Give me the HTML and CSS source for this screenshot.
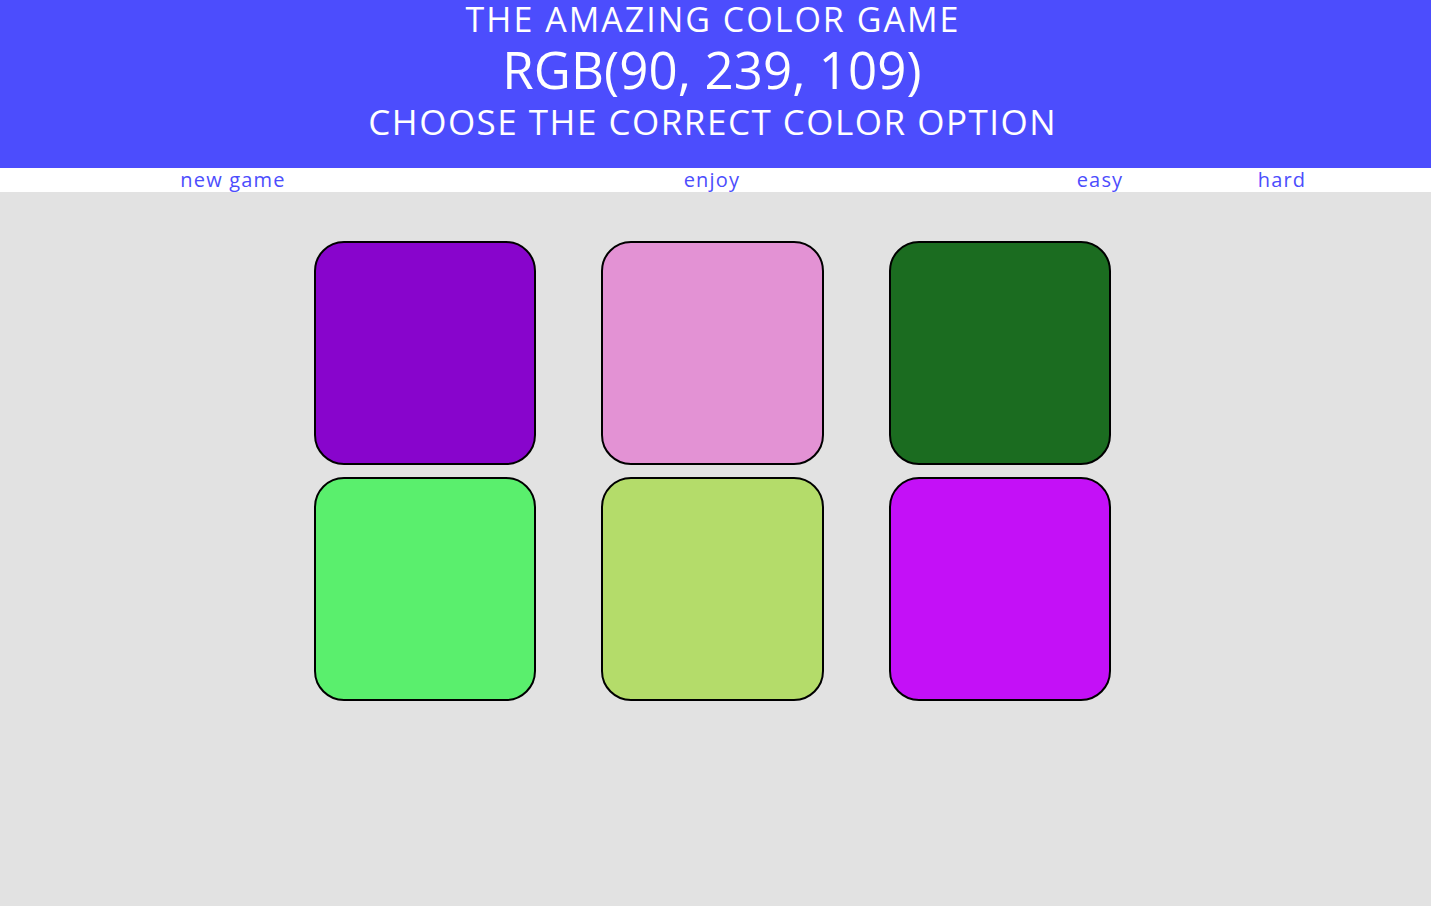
FILE: index.html
```html
<!DOCTYPE html>
<html lang="en">
<head>
<meta charset="utf-8">
<title>The Amazing Color Game</title>
<link rel="stylesheet" href="styles.css">
</head>
<body>
<div class="page">
  <header class="header">
    <div class="title">THE AMAZING COLOR GAME</div>
    <div class="rgb">RGB(90, 239, 109)</div>
    <div class="subtitle">CHOOSE THE CORRECT COLOR OPTION</div>
  </header>
  <nav class="nav">
    <span class="nav-item nav-new">new game</span>
    <span class="nav-item nav-msg">enjoy</span>
    <span class="nav-item nav-easy">easy</span>
    <span class="nav-item nav-hard">hard</span>
  </nav>
  <main class="board">
    <div class="grid">
      <div class="square" style="background: rgb(136, 5, 204);"></div>
      <div class="square" style="background: rgb(227, 146, 212);"></div>
      <div class="square" style="background: rgb(27, 108, 32);"></div>
      <div class="square" style="background: rgb(90, 239, 109);"></div>
      <div class="square" style="background: rgb(180, 220, 106);"></div>
      <div class="square" style="background: rgb(196, 16, 247);"></div>
    </div>
  </main>
</div>
</body>
</html>
```

FILE: styles.css
```css
html, body {
  margin: 0;
  padding: 0;
  height: 100%;
  background: #ffffff;
}

body {
  font-family: "Open Sans", "DejaVu Sans", sans-serif;
  overflow: hidden;
}

.page {
  width: 1431px;
  height: 906px;
  display: flex;
  flex-direction: column;
  background: #e2e2e2;
}

.header {
  background: #4c4dfd;
  color: #ffffff;
  text-align: center;
  padding: 0 7px 25px 0;
  height: 168px;
  box-sizing: border-box;
}

.title {
  font-size: 34px;
  line-height: 38px;
  font-weight: 400;
  letter-spacing: 2px;
  text-indent: 2px;
}

.rgb {
  font-size: 51px;
  line-height: 63px;
  font-weight: 400;
  letter-spacing: 0.1px;
}

.subtitle {
  font-size: 35px;
  line-height: 42px;
  font-weight: 400;
  letter-spacing: 1.5px;
  text-indent: 1.5px;
}

.nav {
  background: #ffffff;
  height: 24px;
  display: flex;
  color: #4c4dfd;
  font-size: 20px;
  line-height: 24px;
  letter-spacing: 1.2px;
}

.nav-item {
  text-align: center;
  white-space: nowrap;
}

.nav-new { width: 466px; }
.nav-msg { width: 492px; }
.nav-easy { width: 284px; }
.nav-hard { width: 80px; }

.board {
  flex: 1;
  background: #e2e2e2;
  padding-top: 49px;
}

.grid {
  width: 797.5px;
  margin-left: 313.5px;
  display: grid;
  grid-template-columns: repeat(3, 222.5px);
  column-gap: 65px;
  row-gap: 12px;
}

.square {
  width: 222.5px;
  height: 224px;
  box-sizing: border-box;
  border: 2px solid #000000;
  border-radius: 30px;
}
```
